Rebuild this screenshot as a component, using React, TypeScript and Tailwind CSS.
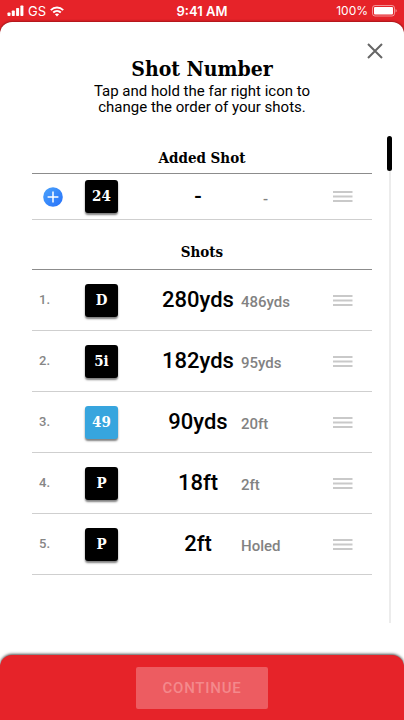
import { clsx } from "clsx"

interface Shot {
  id: number
  club: string
  distance: string
  remaining: string
  highlighted?: boolean
}

const addedShot: Shot = { id: 0, club: "24", distance: "-", remaining: "-" }

const shots: Shot[] = [
  { id: 1, club: "D", distance: "280yds", remaining: "486yds" },
  { id: 2, club: "5i", distance: "182yds", remaining: "95yds" },
  { id: 3, club: "49", distance: "90yds", remaining: "20ft", highlighted: true },
  { id: 4, club: "P", distance: "18ft", remaining: "2ft" },
  { id: 5, club: "P", distance: "2ft", remaining: "Holed" },
]

function StatusBar() {
  return (
    <div className="grid h-[22px] grid-cols-3 items-center px-[7px] text-[13px] leading-4 text-white font-['Inter',sans-serif]">
      <div className="flex items-center gap-1">
        <svg width="17" height="12" viewBox="0 0 17 12" fill="currentColor" aria-hidden="true">
          <rect x="0.5" y="7.5" width="3" height="3.5" rx="0.7" />
          <rect x="4.8" y="5.5" width="3" height="5.5" rx="0.7" />
          <rect x="9.1" y="3" width="3" height="8" rx="0.7" />
          <rect x="13.4" y="0.5" width="3" height="10.5" rx="0.7" />
        </svg>
        <span>GS</span>
        <svg width="14" height="11" viewBox="0 0 14 11" fill="none" stroke="currentColor" strokeWidth="1.9" aria-hidden="true">
          <path d="M0.8 4.1C4.3 0.6 9.7 0.6 13.2 4.1" />
          <path d="M3.2 6.5C5.4 4.4 8.6 4.4 10.8 6.5" />
          <path d="M7 10.4L4.9 8.3C6.1 7.2 7.9 7.2 9.1 8.3Z" fill="currentColor" stroke="none" />
        </svg>
      </div>
      <span className="text-center font-semibold">9:41 AM</span>
      <div className="flex items-center justify-end gap-1">
        <span className="text-[12px]">100%</span>
        <svg width="25" height="12" viewBox="0 0 25 12" fill="none" aria-hidden="true">
          <rect x="0.5" y="0.5" width="22" height="10.5" rx="2.5" stroke="currentColor" strokeOpacity="0.5" />
          <rect x="2" y="2" width="19" height="7.5" rx="1" fill="currentColor" />
          <path d="M23.6 4V7.6C25 7 25 4.6 23.6 4Z" fill="currentColor" fillOpacity="0.6" />
        </svg>
      </div>
    </div>
  )
}

function SectionTitle({ children, className }: { children: string; className?: string }) {
  return (
    <h2
      className={clsx(
        "border-b border-[#8c8c8c] text-center text-[15px] leading-6 font-bold font-['Roboto_Slab','DejaVu_Serif_Condensed','DejaVu_Serif',serif]",
        className
      )}
    >
      {children}
    </h2>
  )
}

function ShotRow({ shot, added }: { shot: Shot; added?: boolean }) {
  return (
    <li
      className={clsx(
        "grid grid-cols-[46px_33px_minmax(0,1fr)_178px_39px] items-center border-b border-[#cfcfcf] pl-[7px]",
        added ? "h-[46px]" : "h-[61px]"
      )}
    >
      {added ? (
        <button type="button" aria-label="Add shot" className="ml-1 size-5">
          <svg width="20" height="20" viewBox="0 0 20 20" aria-hidden="true">
            <defs>
              <linearGradient id="add-fill" x1="0" y1="0" x2="1" y2="1">
                <stop offset="0" stopColor="#4ba3fb" />
                <stop offset="1" stopColor="#2670fa" />
              </linearGradient>
            </defs>
            <circle cx="10" cy="10" r="9.8" fill="url(#add-fill)" />
            <path d="M10 4.6V15.4M4.6 10H15.4" stroke="#fff" strokeWidth="1.5" />
          </svg>
        </button>
      ) : (
        <span className="text-[13px] leading-4 font-medium text-[#868686]">{shot.id}.</span>
      )}

      <span
        className={clsx(
          "flex size-[33px] items-center justify-center rounded-[3px] text-[15px] font-bold text-white shadow-[0_2px_2px_rgba(0,0,0,0.5)] font-['Roboto_Slab','DejaVu_Serif_Condensed','DejaVu_Serif',serif]",
          shot.highlighted ? "bg-[#37a5de]" : "bg-black"
        )}
      >
        {shot.club}
      </span>

      <span />

      <div className="flex items-baseline font-medium">
        <span className="w-[86px] text-center text-[22px] leading-7 text-black">{shot.distance}</span>
        <span className={clsx("text-[15px] text-[#828282]", added && "pl-[22px]")}>{shot.remaining}</span>
      </div>

      {/* Drag handle */}
      <button type="button" aria-label={`Reorder ${shot.club}`} className="w-5">
        <svg width="20" height="11" viewBox="0 0 20 11" fill="#c9c9c9" className="block" aria-hidden="true">
          <rect y="0" width="19.5" height="2" />
          <rect y="4.5" width="19.5" height="2" />
          <rect y="9" width="19.5" height="2" />
        </svg>
      </button>
    </li>
  )
}

export default function App() {
  return (
    <div className="flex min-h-screen flex-col bg-[#e62329] text-black font-['Roboto',sans-serif]">
      <StatusBar />

      <main className="flex flex-1 flex-col rounded-t-[12px] bg-white shadow-[0_0_3px_rgba(80,0,0,0.9)]">
        <header className="pt-[21px] text-center">
          <div className="flex h-4 justify-end pr-[21px]">
            <button type="button" aria-label="Close" className="size-4">
              <svg width="16" height="16" viewBox="0 0 16 16" stroke="#666" strokeWidth="2" aria-hidden="true">
                <path d="M1 1L15 15M15 1L1 15" />
              </svg>
            </button>
          </div>
          <h1 className="pb-1 text-[21px] leading-5 font-bold font-['Roboto_Slab','DejaVu_Serif_Condensed','DejaVu_Serif',serif]">
            Shot Number
          </h1>
          <p className="mx-auto max-w-[240px] text-[15px] leading-4">
            Tap and hold the far right icon to change the order of your shots.
          </p>
        </header>

        <div className="mt-[21px] mb-8 flex flex-1 gap-[15px] pr-3 pl-8">
          <div className="flex-1">
            <SectionTitle className="pt-[10px] pb-[3px]">Added Shot</SectionTitle>
            <ul>
              <ShotRow shot={addedShot} added />
            </ul>
            <SectionTitle className="pt-5 pb-[5px]">Shots</SectionTitle>
            <ol>
              {shots.map((shot) => (
                <ShotRow key={shot.id} shot={shot} />
              ))}
            </ol>
          </div>

          {/* Scroll indicator */}
          <div className="flex w-[5px] flex-col items-center" aria-hidden="true">
            <div className="h-[35px] w-[5px] rounded-full bg-black" />
            <div className="w-[2px] flex-1 bg-[#ececec]" />
          </div>
        </div>
      </main>

      <div className="bg-white">
        <footer className="flex justify-center rounded-t-[12px] bg-[#e62329] pt-3 pb-[11px] shadow-[0_-1px_3px_rgba(0,0,0,0.7)]">
          <button
            type="button"
            disabled
            className="h-[42px] rounded-[2px] bg-[#ed5c61] px-[27px] text-[15px] font-medium tracking-wider text-[#f4898c]"
          >
            CONTINUE
          </button>
        </footer>
      </div>
    </div>
  )
}
